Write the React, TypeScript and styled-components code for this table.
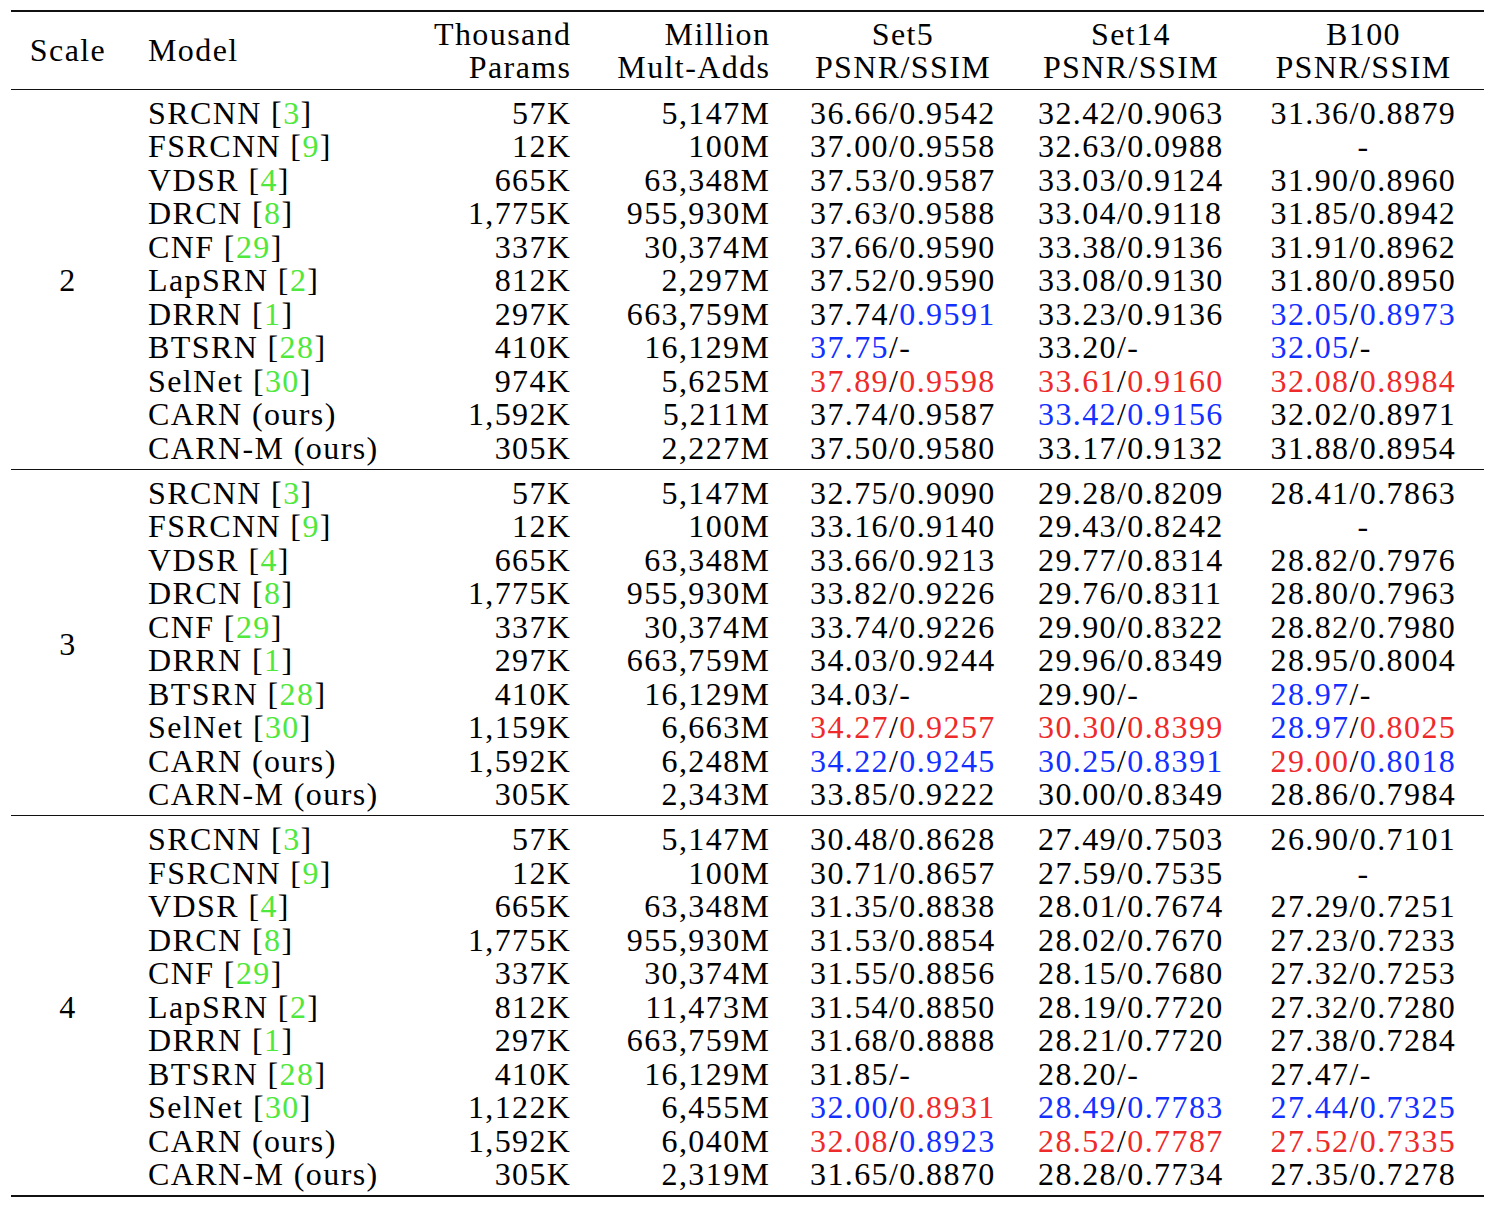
import { FC, Fragment } from "react";
import { createGlobalStyle, styled } from "styled-components";

type Tone = "k" | "r" | "b";

interface Metric {
  psnr: string;
  ssim: string | null;
  p: Tone;
  s: Tone;
  slash: Tone;
}

interface Row {
  name: string;
  cite?: string;
  params: string;
  adds: string;
  set5: Metric | null;
  set14: Metric | null;
  b100: Metric | null;
}

interface Section {
  scale: string;
  rows: Row[];
}

const GlobalStyle = createGlobalStyle`
  html, body {
    margin: 0;
    padding: 0;
    background: #ffffff;
  }
  body {
    font-family: "Liberation Serif", "DejaVu Serif", serif;
    color: #000000;
  }
`;

const TONES: Record<Tone, string> = {
  k: "#000000",
  r: "#ee2a2a",
  b: "#1230ff",
};

const COLUMNS = "114px 275px 170px 199px 268px 188px 259px";

// "37.74/0.9591:kb" -> psnr black, ssim blue; optional third letter colours the slash
const m = (text: string): Metric | null => {
  if (text === "-") return null;
  const [value, tones = "kk"] = text.split(":");
  const [psnr, ssim] = value.split("/");
  return {
    psnr,
    ssim: ssim === "-" ? null : ssim,
    p: tones[0] as Tone,
    s: tones[1] as Tone,
    slash: (tones[2] as Tone) || "k",
  };
};

const r = (
  name: string,
  cite: string | undefined,
  params: string,
  adds: string,
  set5: string,
  set14: string,
  b100: string
): Row => ({ name, cite, params, adds, set5: m(set5), set14: m(set14), b100: m(b100) });

const SECTIONS: Section[] = [
  {
    scale: "2",
    rows: [
      r("SRCNN", "3", "57K", "5,147M", "36.66/0.9542", "32.42/0.9063", "31.36/0.8879"),
      r("FSRCNN", "9", "12K", "100M", "37.00/0.9558", "32.63/0.0988", "-"),
      r("VDSR", "4", "665K", "63,348M", "37.53/0.9587", "33.03/0.9124", "31.90/0.8960"),
      r("DRCN", "8", "1,775K", "955,930M", "37.63/0.9588", "33.04/0.9118", "31.85/0.8942"),
      r("CNF", "29", "337K", "30,374M", "37.66/0.9590", "33.38/0.9136", "31.91/0.8962"),
      r("LapSRN", "2", "812K", "2,297M", "37.52/0.9590", "33.08/0.9130", "31.80/0.8950"),
      r("DRRN", "1", "297K", "663,759M", "37.74/0.9591:kb", "33.23/0.9136", "32.05/0.8973:bb"),
      r("BTSRN", "28", "410K", "16,129M", "37.75/-:bk", "33.20/-", "32.05/-:bk"),
      r("SelNet", "30", "974K", "5,625M", "37.89/0.9598:rr", "33.61/0.9160:rr", "32.08/0.8984:rr"),
      r("CARN (ours)", undefined, "1,592K", "5,211M", "37.74/0.9587", "33.42/0.9156:bb", "32.02/0.8971"),
      r("CARN-M (ours)", undefined, "305K", "2,227M", "37.50/0.9580", "33.17/0.9132", "31.88/0.8954"),
    ],
  },
  {
    scale: "3",
    rows: [
      r("SRCNN", "3", "57K", "5,147M", "32.75/0.9090", "29.28/0.8209", "28.41/0.7863"),
      r("FSRCNN", "9", "12K", "100M", "33.16/0.9140", "29.43/0.8242", "-"),
      r("VDSR", "4", "665K", "63,348M", "33.66/0.9213", "29.77/0.8314", "28.82/0.7976"),
      r("DRCN", "8", "1,775K", "955,930M", "33.82/0.9226", "29.76/0.8311", "28.80/0.7963"),
      r("CNF", "29", "337K", "30,374M", "33.74/0.9226", "29.90/0.8322", "28.82/0.7980"),
      r("DRRN", "1", "297K", "663,759M", "34.03/0.9244", "29.96/0.8349", "28.95/0.8004"),
      r("BTSRN", "28", "410K", "16,129M", "34.03/-", "29.90/-", "28.97/-:bk"),
      r("SelNet", "30", "1,159K", "6,663M", "34.27/0.9257:rr", "30.30/0.8399:rr", "28.97/0.8025:br"),
      r("CARN (ours)", undefined, "1,592K", "6,248M", "34.22/0.9245:bb", "30.25/0.8391:bb", "29.00/0.8018:rb"),
      r("CARN-M (ours)", undefined, "305K", "2,343M", "33.85/0.9222", "30.00/0.8349", "28.86/0.7984"),
    ],
  },
  {
    scale: "4",
    rows: [
      r("SRCNN", "3", "57K", "5,147M", "30.48/0.8628", "27.49/0.7503", "26.90/0.7101"),
      r("FSRCNN", "9", "12K", "100M", "30.71/0.8657", "27.59/0.7535", "-"),
      r("VDSR", "4", "665K", "63,348M", "31.35/0.8838", "28.01/0.7674", "27.29/0.7251"),
      r("DRCN", "8", "1,775K", "955,930M", "31.53/0.8854", "28.02/0.7670", "27.23/0.7233"),
      r("CNF", "29", "337K", "30,374M", "31.55/0.8856", "28.15/0.7680", "27.32/0.7253"),
      r("LapSRN", "2", "812K", "11,473M", "31.54/0.8850", "28.19/0.7720", "27.32/0.7280"),
      r("DRRN", "1", "297K", "663,759M", "31.68/0.8888", "28.21/0.7720", "27.38/0.7284"),
      r("BTSRN", "28", "410K", "16,129M", "31.85/-", "28.20/-", "27.47/-"),
      r("SelNet", "30", "1,122K", "6,455M", "32.00/0.8931:br", "28.49/0.7783:bb", "27.44/0.7325:bb"),
      r("CARN (ours)", undefined, "1,592K", "6,040M", "32.08/0.8923:rb", "28.52/0.7787:rr", "27.52/0.7335:rrr"),
      r("CARN-M (ours)", undefined, "305K", "2,319M", "31.65/0.8870", "28.28/0.7734", "27.35/0.7278"),
    ],
  },
];

const Page = styled.div`
  padding: 10px 0 0 11px;
`;

const Table = styled.div`
  width: 1473px;
  border-top: 2px solid #111;
  border-bottom: 2px solid #111;
  font-size: 32px;
  letter-spacing: 1.4px;
  line-height: 33.5px;
`;

const Head = styled.div`
  display: grid;
  grid-template-columns: ${COLUMNS};
  padding: 5.7px 0 4.3px;
  border-bottom: 1px solid #111;
`;

const Body = styled.div<{ $last: boolean }>`
  display: grid;
  grid-template-columns: ${COLUMNS};
  grid-auto-rows: 33.5px;
  padding: 7px 0 3.5px;
  border-bottom: ${({ $last }) => ($last ? "none" : "1px solid #111")};
`;

const ScaleCell = styled.div<{ $span: number }>`
  grid-column: 1;
  grid-row: 1 / span ${({ $span }) => $span};
  align-self: center;
  text-align: center;
`;

const HeadCell = styled.div<{ $align: "left" | "right" | "center"; $last?: boolean }>`
  align-self: center;
  text-align: ${({ $align }) => $align};
  padding-left: ${({ $align, $last }) => ($align === "left" ? "23px" : $last ? "18px" : "0")};
  margin-right: ${({ $align }) => ($align === "right" ? "-1.4px" : "0")};
  white-space: nowrap;
`;

const ModelCell = styled.div`
  padding-left: 23px;
  white-space: nowrap;
`;

const Cite = styled.span`
  color: #4fe83c;
`;

const NumCell = styled.div`
  text-align: right;
  margin-right: -1.4px;
  white-space: nowrap;
`;

const MetricCell = styled.div<{ $last?: boolean }>`
  display: flex;
  justify-content: center;
  padding-left: ${({ $last }) => ($last ? "18px" : "0")};
  white-space: nowrap;
`;

const MetricText = styled.span<{ $partial: boolean }>`
  display: inline-block;
  width: ${({ $partial }) => ($partial ? "186px" : "auto")};
  text-align: left;
`;

const Tinted = styled.span<{ $tone: Tone }>`
  color: ${({ $tone }) => TONES[$tone]};
`;

const MetricValue: FC<{ metric: Metric | null; last?: boolean }> = ({ metric, last }) => {
  if (!metric) {
    return (
      <MetricCell $last={last}>
        <MetricText $partial={false}>-</MetricText>
      </MetricCell>
    );
  }
  return (
    <MetricCell $last={last}>
      <MetricText $partial>
        <Tinted $tone={metric.p}>{metric.psnr}</Tinted>
        <Tinted $tone={metric.slash}>/</Tinted>
        {metric.ssim ? <Tinted $tone={metric.s}>{metric.ssim}</Tinted> : "-"}
      </MetricText>
    </MetricCell>
  );
};

export default function App() {
  return (
    <Page>
      <GlobalStyle />
      <Table>
        <Head>
          <HeadCell $align="center">Scale</HeadCell>
          <HeadCell $align="left">Model</HeadCell>
          <HeadCell $align="right">
            Thousand
            <br />
            Params
          </HeadCell>
          <HeadCell $align="right">
            Million
            <br />
            Mult-Adds
          </HeadCell>
          <HeadCell $align="center">
            Set5
            <br />
            PSNR/SSIM
          </HeadCell>
          <HeadCell $align="center">
            Set14
            <br />
            PSNR/SSIM
          </HeadCell>
          <HeadCell $align="center" $last>
            B100
            <br />
            PSNR/SSIM
          </HeadCell>
        </Head>
        {SECTIONS.map((section, i) => (
          <Body key={section.scale} $last={i === SECTIONS.length - 1}>
            <ScaleCell $span={section.rows.length}>{section.scale}</ScaleCell>
            {section.rows.map((row) => (
              <Fragment key={row.name}>
                <ModelCell>
                  {row.name}
                  {row.cite && (
                    <>
                      {" "}[<Cite>{row.cite}</Cite>]
                    </>
                  )}
                </ModelCell>
                <NumCell>{row.params}</NumCell>
                <NumCell>{row.adds}</NumCell>
                <MetricValue metric={row.set5} />
                <MetricValue metric={row.set14} />
                <MetricValue metric={row.b100} last />
              </Fragment>
            ))}
          </Body>
        ))}
      </Table>
    </Page>
  );
}
